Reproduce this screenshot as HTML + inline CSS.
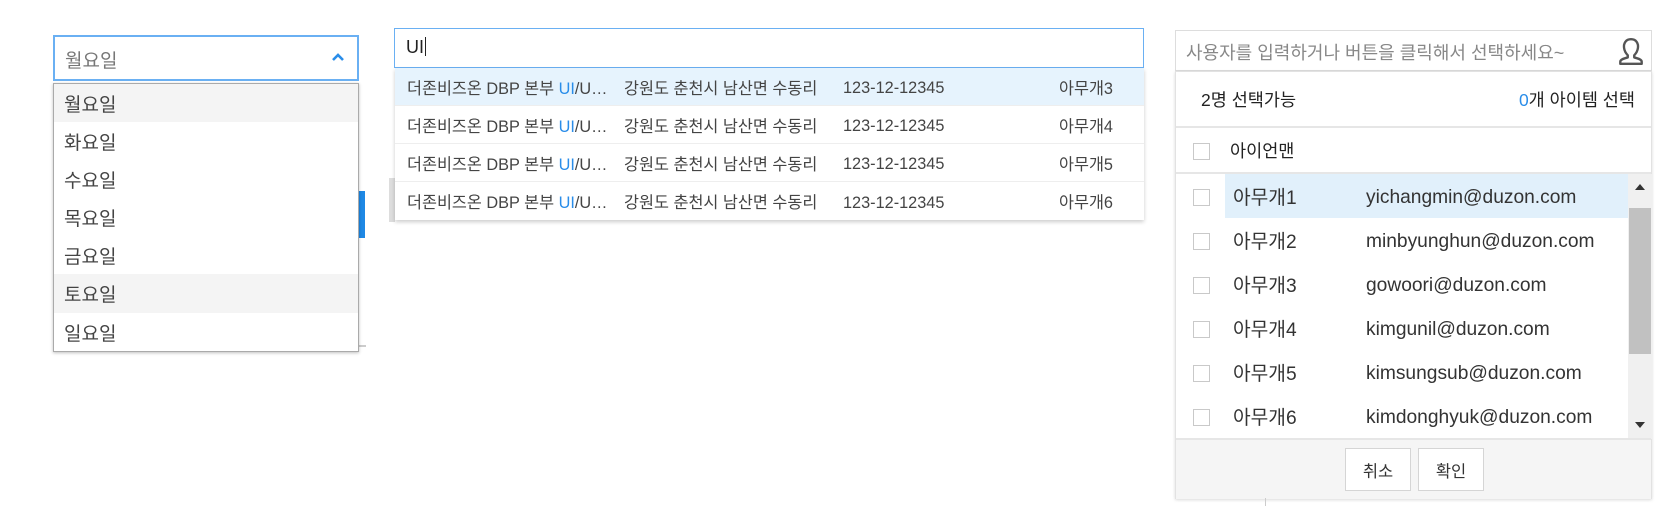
<!DOCTYPE html>
<html><head><meta charset="utf-8"><style>
*{margin:0;padding:0;box-sizing:border-box}
body{width:1674px;height:530px;background:#fff;position:relative;overflow:hidden;font-family:"Liberation Sans","Noto Sans CJK KR",sans-serif;color:#333}
.abs{position:absolute}
.row{position:absolute;left:0;right:0;display:flex;align-items:center}
.cb{position:absolute;width:17px;height:17px;border:1px solid #c9c9c9;background:#fff}
.e{transform:translateY(2px)}
</style></head><body>

<div class="abs" style="left:358px;top:191px;width:7px;height:47px;background:#1e88e5"></div>
<div class="abs" style="left:358px;top:345px;width:8px;height:2px;background:#ccc"></div>
<div class="abs" style="left:53px;top:35px;width:306px;height:46px;border:2px solid #6ab0f3;background:#fff">
  <span class="abs" style="left:10px;top:9px;font-size:19px;color:#777">월요일</span>
  <svg class="abs" style="left:276px;top:15px" width="14" height="10" viewBox="0 0 14 10"><path d="M2 8 L7 3 L12 8" stroke="#2a8de9" stroke-width="2.6" fill="none"/></svg>
</div>
<div class="abs" style="left:53px;top:83px;width:306px;height:269px;border:1px solid #aaa;background:#fff;box-shadow:0 1px 3px rgba(0,0,0,.25);font-size:19px;color:#444">
  <div class="row" style="top:0;height:38px;background:#f4f4f4;padding-left:10px">월요일</div>
  <div class="row" style="top:38px;height:38px;padding-left:10px">화요일</div>
  <div class="row" style="top:76px;height:38px;padding-left:10px">수요일</div>
  <div class="row" style="top:114px;height:38px;padding-left:10px">목요일</div>
  <div class="row" style="top:152px;height:38px;padding-left:10px">금요일</div>
  <div class="row" style="top:190px;height:39px;background:#f4f4f4;padding-left:10px">토요일</div>
  <div class="row" style="top:229px;height:38px;padding-left:10px">일요일</div>
</div>

<div class="abs" style="left:389px;top:178px;width:6px;height:44px;background:#ddd"></div>
<div class="abs" style="left:394px;top:28px;width:750px;height:40px;border:1px solid #6ab0f3;background:#fff">
  <span class="abs" style="left:11px;top:8px;font-size:18px;color:#222">UI<span style="display:inline-block;width:1px;height:19px;background:#222;vertical-align:-3px;margin-left:1px"></span></span>
</div>
<div class="abs" style="left:395px;top:68px;width:749px;height:152px;background:#fff;box-shadow:0 2px 4px rgba(0,0,0,.2);font-size:16.3px;color:#444">
  <div class="row" style="top:0;height:38px;background:#e6f3fd;border-bottom:1px solid #eee"><span class="abs" style="left:12px">더존비즈온 DBP 본부 <span style="color:#2a8de9">UI</span>/U…</span><span class="abs" style="left:229px">강원도 춘천시 남산면 수동리</span><span class="abs e" style="left:448px">123-12-12345</span><span class="abs" style="left:664px">아무개3</span></div>
  <div class="row" style="top:38px;height:38px;border-bottom:1px solid #eee"><span class="abs" style="left:12px">더존비즈온 DBP 본부 <span style="color:#2a8de9">UI</span>/U…</span><span class="abs" style="left:229px">강원도 춘천시 남산면 수동리</span><span class="abs e" style="left:448px">123-12-12345</span><span class="abs" style="left:664px">아무개4</span></div>
  <div class="row" style="top:76px;height:38px;border-bottom:1px solid #eee"><span class="abs" style="left:12px">더존비즈온 DBP 본부 <span style="color:#2a8de9">UI</span>/U…</span><span class="abs" style="left:229px">강원도 춘천시 남산면 수동리</span><span class="abs e" style="left:448px">123-12-12345</span><span class="abs" style="left:664px">아무개5</span></div>
  <div class="row" style="top:114px;height:38px"><span class="abs" style="left:12px">더존비즈온 DBP 본부 <span style="color:#2a8de9">UI</span>/U…</span><span class="abs" style="left:229px">강원도 춘천시 남산면 수동리</span><span class="abs e" style="left:448px">123-12-12345</span><span class="abs" style="left:664px">아무개6</span></div>
</div>

<div class="abs" style="left:1175px;top:30px;width:477px;height:41px;border:1px solid #ddd;background:#fff">
  <span class="abs" style="left:10px;top:8px;font-size:18px;color:#888">사용자를 입력하거나 버튼을 클릭해서 선택하세요~</span>
  <svg class="abs" style="left:440px;top:5px" width="30" height="30" viewBox="0 0 28 28"><path d="M14 3 C9 3 7 7 7.5 11 C8 15 10 17 11 18 L11 20 C7 21 4 22 4 24 L4 26 L24 26 L24 24 C24 22 21 21 17 20 L17 18 C18 17 20 15 20.5 11 C21 7 19 3 14 3 Z" stroke="#555" stroke-width="2.2" fill="none" stroke-linejoin="round"/></svg>
</div>
<div class="abs" style="left:1175px;top:71px;width:477px;height:428px;background:#fff;border:1px solid #e2e2e2;box-shadow:0 1px 3px rgba(0,0,0,.15)">
  <div class="row" style="top:0;height:56px;border-bottom:2px solid #e6e6e6;font-size:17.5px;color:#222"><span class="abs" style="left:25px">2명 선택가능</span><span class="abs" style="right:16px"><span style="color:#2a8de9">0</span>개 아이템 선택</span></div>
  <div class="row" style="top:56px;height:46px;border-bottom:2px solid #e6e6e6;font-size:17.5px;color:#222"><div class="cb" style="left:17px;top:15px"></div><span class="abs" style="left:54px">아이언맨</span></div>
  <div class="abs" style="left:0;top:102px;width:452px;height:265px;font-size:19.2px;color:#333">
    <div class="row" style="top:0;height:44px;"><div class="abs" style="left:49px;top:0;width:403px;height:44px;background:#e1f0fb"></div><div class="cb" style="left:17px;top:15px"></div><span class="abs" style="left:57px">아무개1</span><span class="abs e" style="left:190px">yichangmin@duzon.com</span></div>
    <div class="row" style="top:44px;height:44px"><div class="cb" style="left:17px;top:15px"></div><span class="abs" style="left:57px">아무개2</span><span class="abs e" style="left:190px">minbyunghun@duzon.com</span></div>
    <div class="row" style="top:88px;height:44px"><div class="cb" style="left:17px;top:15px"></div><span class="abs" style="left:57px">아무개3</span><span class="abs e" style="left:190px">gowoori@duzon.com</span></div>
    <div class="row" style="top:132px;height:44px"><div class="cb" style="left:17px;top:15px"></div><span class="abs" style="left:57px">아무개4</span><span class="abs e" style="left:190px">kimgunil@duzon.com</span></div>
    <div class="row" style="top:176px;height:44px"><div class="cb" style="left:17px;top:15px"></div><span class="abs" style="left:57px">아무개5</span><span class="abs e" style="left:190px">kimsungsub@duzon.com</span></div>
    <div class="row" style="top:220px;height:44px"><div class="cb" style="left:17px;top:15px"></div><span class="abs" style="left:57px">아무개6</span><span class="abs e" style="left:190px">kimdonghyuk@duzon.com</span></div>
  </div>
  <div class="abs" style="left:452px;top:102px;width:24px;height:265px;background:#f0f0f0">
    <svg class="abs" style="left:7px;top:10px" width="10" height="6"><path d="M0 6 L5 0 L10 6Z" fill="#333"/></svg>
    <div class="abs" style="left:1px;top:34px;width:22px;height:146px;background:#c1c1c1"></div>
    <svg class="abs" style="left:7px;top:248px" width="10" height="6"><path d="M0 0 L5 6 L10 0Z" fill="#333"/></svg>
  </div>
  <div class="abs" style="left:0;top:366px;width:475px;height:61px;background:#f5f5f5;border-top:2px solid #e6e6e6">
    <div class="abs" style="left:169px;top:8px;width:66px;height:43px;border:1px solid #d5d5d5;background:#fff;font-size:16.5px;color:#333;display:flex;align-items:center;justify-content:center">취소</div>
    <div class="abs" style="left:242px;top:8px;width:66px;height:43px;border:1px solid #d5d5d5;background:#fff;font-size:16.5px;color:#333;display:flex;align-items:center;justify-content:center">확인</div>
  </div>
</div>
<div class="abs" style="left:1265px;top:498px;width:1px;height:8px;background:#ccc"></div>
</body></html>
